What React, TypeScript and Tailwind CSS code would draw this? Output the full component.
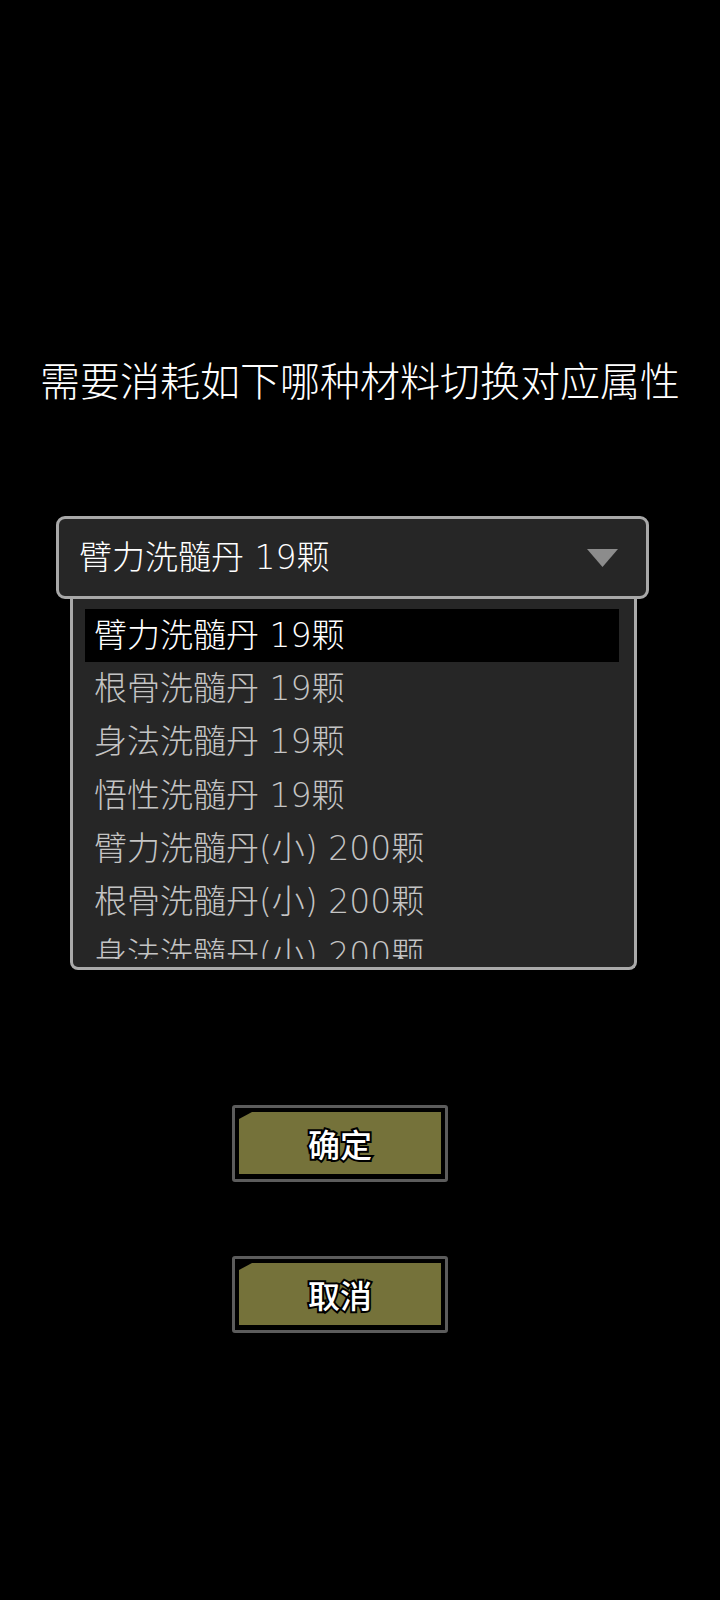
import React from "react";

const font = {
  fontFamily: '"Noto Sans CJK SC", "Noto Sans", sans-serif',
};

// option labels: DejaVu for the digits and brackets, CJK falls back to Noto
const optionFont = {
  fontFamily: '"DejaVu Sans", "Noto Sans CJK SC", sans-serif',
};

const options = [
  "臂力洗髓丹 19颗",
  "根骨洗髓丹 19颗",
  "身法洗髓丹 19颗",
  "悟性洗髓丹 19颗",
  "臂力洗髓丹(小) 200颗",
  "根骨洗髓丹(小) 200颗",
  "身法洗髓丹(小) 200颗",
  "悟性洗髓丹(小) 200颗",
];

function GameButton({ label }: { label: string }) {
  return (
    <div className="ml-[232px] h-[77px] w-[216px] rounded-[3px] border-[3px] border-[#5c5c5c] bg-black px-[4px] pb-[5px] pt-[4px]">
      <div className="flex h-full w-full items-center justify-center bg-[#75723a] [clip-path:polygon(13px_0,100%_0,100%_100%,0_100%,0_7px)]">
        <span className="text-[32px] font-medium leading-none text-white [-webkit-text-stroke:4px_black] [paint-order:stroke_fill]">
          {label}
        </span>
      </div>
    </div>
  );
}

export default function App() {
  const selected = 0;

  return (
    <div className="flex min-h-[1600px] w-full flex-col bg-black" style={font}>
      <h1 className="w-full pt-[355px] text-center text-[40px] leading-[48px] font-light text-white">
        需要消耗如下哪种材料切换对应属性
      </h1>

      <div className="mt-[113px] flex flex-col" style={optionFont}>
        <div className="ml-[56px] flex h-[83px] w-[593px] items-center justify-between rounded-[9px] border-[3px] border-[#a8a8a8] bg-[#262626] pl-[20px] pr-[28px]">
          <span className="text-[33px] font-extralight leading-none text-white">
            {options[selected]}
          </span>
          <svg width="31" height="18" viewBox="0 0 31 18">
            <polygon points="0,0 31,0 15.5,18" fill="#8c8c8c" />
          </svg>
        </div>

        <div className="ml-[70px] w-[567px] rounded-b-[8px] border-x-[3px] border-b-[3px] border-[#aaaaaa] bg-[#262626] pb-[8px] pl-[12px] pr-[15px] pt-[10px]">
          <div className="h-[350px] overflow-hidden">
            {options.map((option, index) => (
              <div
                key={option}
                className={`flex h-[53.2px] items-center pl-[9px] text-[33px] font-extralight leading-none ${
                  index === selected
                    ? "bg-black text-white"
                    : "text-[#c4c4c4]"
                }`}
              >
                {option}
              </div>
            ))}
          </div>
        </div>
      </div>

      <div className="mt-[135px] flex flex-col gap-[74px]">
        <GameButton label="确定" />
        <GameButton label="取消" />
      </div>
    </div>
  );
}
